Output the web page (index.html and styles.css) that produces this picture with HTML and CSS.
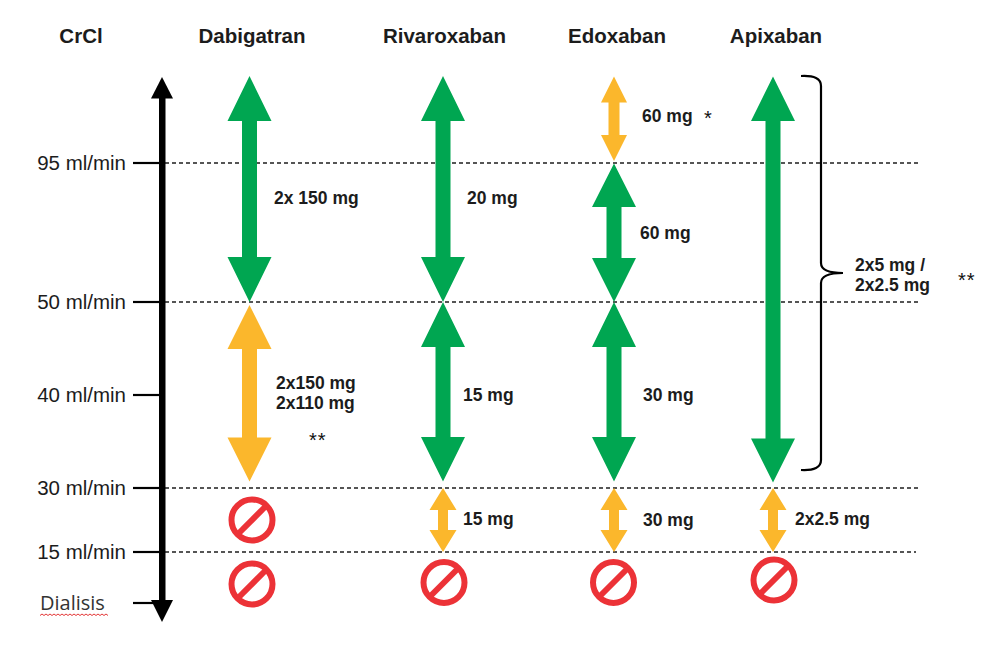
FILE: index.html
```html
<!DOCTYPE html>
<html lang="en">
<head>
<meta charset="utf-8">
<title>CrCl dosing chart</title>
<link rel="stylesheet" href="styles.css">
</head>
<body>
<div class="chart">
<svg class="canvas" width="992" height="668" viewBox="0 0 992 668" xmlns="http://www.w3.org/2000/svg">
  <!-- headers -->
  <text class="hdr" x="81" y="43" text-anchor="middle">CrCl</text>
  <text class="hdr" x="252" y="43" text-anchor="middle">Dabigatran</text>
  <text class="hdr" x="444.5" y="43" text-anchor="middle">Rivaroxaban</text>
  <text class="hdr" x="617" y="43" text-anchor="middle">Edoxaban</text>
  <text class="hdr" x="776" y="43" text-anchor="middle">Apixaban</text>

  <!-- dashed level lines -->
  <g class="dash">
    <line x1="165" y1="163" x2="918" y2="163"/>
    <line x1="165" y1="302" x2="918" y2="302"/>
    <line x1="165" y1="488" x2="918" y2="488"/>
    <line x1="165" y1="552" x2="916" y2="552"/>
  </g>

  <!-- axis ticks -->
  <g class="tick">
    <line x1="133" y1="163" x2="161" y2="163"/>
    <line x1="133" y1="302" x2="161" y2="302"/>
    <line x1="133" y1="395" x2="161" y2="395"/>
    <line x1="133" y1="488" x2="161" y2="488"/>
    <line x1="133" y1="552" x2="161" y2="552"/>
    <line x1="133" y1="603" x2="161" y2="603"/>
  </g>

  <!-- axis labels -->
  <text class="axis" x="126" y="170" text-anchor="end">95 ml/min</text>
  <text class="axis" x="126" y="309" text-anchor="end">50 ml/min</text>
  <text class="axis" x="126" y="402" text-anchor="end">40 ml/min</text>
  <text class="axis" x="126" y="495" text-anchor="end">30 ml/min</text>
  <text class="axis" x="126" y="559" text-anchor="end">15 ml/min</text>
  <text class="dial" x="40" y="610">Dialisis</text>
  <path class="wavy" d="M40 615.5 l2 -1.5 l2 1.5 l2 -1.5 l2 1.5 l2 -1.5 l2 1.5 l2 -1.5 l2 1.5 l2 -1.5 l2 1.5 l2 -1.5 l2 1.5 l2 -1.5 l2 1.5 l2 -1.5 l2 1.5 l2 -1.5 l2 1.5 l2 -1.5 l2 1.5 l2 -1.5 l2 1.5 l2 -1.5 l2 1.5 l2 -1.5 l2 1.5 l2 -1.5 l2 1.5 l2 -1.5 l2 1.5 l2 -1.5 l2 1.5 l2 -1.5 l2 1.5"/>

  <!-- main axis arrow -->
  <rect class="black" x="159" y="96" width="6.5" height="506"/>
  <polygon class="black" points="162,77 173,98.5 151,98.5"/>
  <polygon class="black" points="162,622 173,600 151,600"/>

  <!-- Dabigatran -->
  <polygon class="green" points="249.5,76 271.5,121 257,121 257,257 271.5,257 249.5,302 227.5,257 242,257 242,121 227.5,121"/>
  <polygon class="orange" points="249.5,305 271.5,349 257,349 257,437.5 271.5,437.5 249.5,481.5 227.5,437.5 242,437.5 242,349 227.5,349"/>

  <!-- Rivaroxaban -->
  <polygon class="green" points="443,76 465,121 450.5,121 450.5,257 465,257 443,302 421,257 435.5,257 435.5,121 421,121"/>
  <polygon class="green" points="443,302 465,347 450.5,347 450.5,437 465,437 443,481.5 421,437 435.5,437 435.5,347 421,347"/>
  <polygon class="orange" points="443,488 456.5,510 448,510 448,530 456.5,530 443,552 429.5,530 438,530 438,510 429.5,510"/>

  <!-- Edoxaban -->
  <polygon class="orange" points="614,76.5 627,102.5 619.5,102.5 619.5,135 627,135 614,161 601,135 608.5,135 608.5,102.5 601,102.5"/>
  <polygon class="green" points="614,163.5 636,207 621.5,207 621.5,258 636,258 614,302 592,258 606.5,258 606.5,207 592,207"/>
  <polygon class="green" points="614,302 636,347 621.5,347 621.5,437 636,437 614,481.5 592,437 606.5,437 606.5,347 592,347"/>
  <polygon class="orange" points="614,488 627.5,510 619,510 619,530 627.5,530 614,552 600.5,530 609,530 609,510 600.5,510"/>

  <!-- Apixaban -->
  <polygon class="green" points="773,76.5 795,121 780.5,121 780.5,438.5 795,438.5 773,482.5 751,438.5 765.5,438.5 765.5,121 751,121"/>
  <polygon class="orange" points="773,488 786.5,510 778,510 778,530 786.5,530 773,552 759.5,530 768,530 768,510 759.5,510"/>
  <path class="brace" d="M801 76 Q821 75 821 86 L821 263 Q821 273 843 273 Q821 273 821 283 L821 460 Q821 471 801 470"/>

  <!-- prohibition signs -->
  <g class="noentry">
    <circle cx="252" cy="520" r="20.5"/><line x1="266" y1="506" x2="238" y2="534"/>
    <circle cx="252" cy="584" r="20.5"/><line x1="266" y1="570" x2="238" y2="598"/>
    <circle cx="444" cy="582.5" r="20.5"/><line x1="458" y1="568.5" x2="430" y2="596.5"/>
    <circle cx="613.5" cy="582.5" r="20.5"/><line x1="627.5" y1="568.5" x2="599.5" y2="596.5"/>
    <circle cx="774" cy="580" r="20.5"/><line x1="788" y1="566" x2="760" y2="594"/>
  </g>

  <!-- dose labels -->
  <text class="dose" x="274" y="204">2x 150 mg</text>
  <text class="dose" x="467" y="204">20 mg</text>
  <text class="dose" x="276" y="389">2x150 mg</text>
  <text class="dose" x="276" y="409">2x110 mg</text>
  <text class="star" x="309" y="447">**</text>
  <text class="dose" x="463" y="401">15 mg</text>
  <text class="dose" x="463" y="525">15 mg</text>
  <text class="dose" x="642" y="122">60 mg</text>
  <text class="star" x="704" y="125">*</text>
  <text class="dose" x="640" y="239">60 mg</text>
  <text class="dose" x="643" y="401">30 mg</text>
  <text class="dose" x="643" y="526">30 mg</text>
  <text class="dose" x="855" y="271">2x5 mg /</text>
  <text class="dose" x="855" y="291">2x2.5 mg</text>
  <text class="star" x="958" y="287">**</text>
  <text class="dose" x="795" y="525">2x2.5 mg</text>
</svg>
</div>
</body>
</html>
```
FILE: styles.css
```css
html, body {
  margin: 0;
  padding: 0;
  background: #ffffff;
}

.chart {
  width: 992px;
  height: 668px;
  overflow: hidden;
}

.canvas {
  display: block;
}

.hdr {
  font-family: "Liberation Sans", Arial, sans-serif;
  font-weight: bold;
  font-size: 20.5px;
  fill: #1c1c1c;
}

.axis {
  font-family: "Liberation Sans", Arial, sans-serif;
  font-size: 20.5px;
  fill: #1c1c1c;
}

.dial {
  font-family: "Open Sans", "Noto Sans", sans-serif;
  font-size: 20px;
  fill: #333333;
}

.wavy {
  fill: none;
  stroke: #e02020;
  stroke-width: 0.9;
}

.dose {
  font-family: "Liberation Sans", Arial, sans-serif;
  font-weight: bold;
  font-size: 17.5px;
  fill: #1c1c1c;
}

.star {
  font-family: "Liberation Sans", Arial, sans-serif;
  font-size: 20px;
  fill: #111111;
  letter-spacing: 1px;
}

.dash line {
  stroke: #1e1e1e;
  stroke-width: 1.5;
  stroke-dasharray: 4 3;
}

.tick line {
  stroke: #000000;
  stroke-width: 2.2;
}

.black {
  fill: #000000;
}

.green {
  fill: #00a651;
}

.orange {
  fill: #fbb72c;
}

.brace {
  fill: none;
  stroke: #000000;
  stroke-width: 2.2;
}

.noentry circle {
  fill: none;
  stroke: #ec3237;
  stroke-width: 6;
}

.noentry line {
  stroke: #ec3237;
  stroke-width: 6;
}
```
